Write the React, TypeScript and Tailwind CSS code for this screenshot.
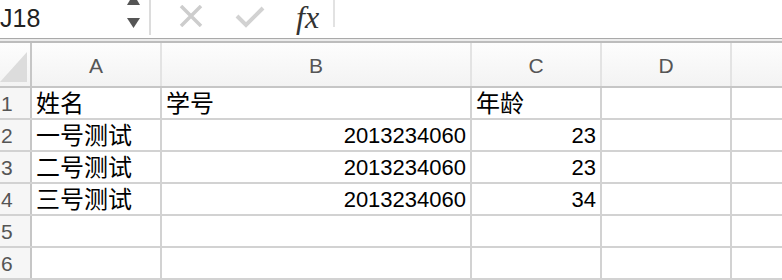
const font = { fontFamily: '"Liberation Sans", "Noto Sans CJK SC", sans-serif' }

const cols = ["A", "B", "C", "D"]
const widths = ["w-[130px]", "w-[310px]", "w-[130px]", "w-[130px]"]

type Cell = { text: string; right?: boolean }

const rows: Cell[][] = [
  [{ text: "姓名" }, { text: "学号" }, { text: "年龄" }, { text: "" }],
  [{ text: "一号测试" }, { text: "2013234060", right: true }, { text: "23", right: true }, { text: "" }],
  [{ text: "二号测试" }, { text: "2013234060", right: true }, { text: "23", right: true }, { text: "" }],
  [{ text: "三号测试" }, { text: "2013234060", right: true }, { text: "34", right: true }, { text: "" }],
  [{ text: "" }, { text: "" }, { text: "" }, { text: "" }],
  [{ text: "" }, { text: "" }, { text: "" }, { text: "" }],
]

function FormulaBar() {
  return (
    <div className="flex h-[38px] bg-white">
      <div className="relative flex w-[149px] flex-shrink-0 items-center">
        <span className="pb-[1px] text-[25px] leading-none text-[#222]">J18</span>
        <svg className="absolute left-[126px] top-[-6px]" width="15" height="36" viewBox="0 0 15 36">
          <polygon points="7.5,0 14,11 1,11" fill="#555" />
          <polygon points="1,24 14,24 7.5,34" fill="#555" />
        </svg>
      </div>
      <div className="h-[35px] w-[2px] bg-[#dcdcdc]" />
      <div className="flex items-start">
        <svg className="ml-[28px] mt-[5px]" width="24" height="22" viewBox="0 0 24 22">
          <path d="M2 1 L22 21 M22 1 L2 21" stroke="#cdcdcd" strokeWidth="3.5" fill="none" />
        </svg>
        <svg className="ml-[32px] mt-[6px]" width="30" height="22" viewBox="0 0 30 22">
          <path d="M2 10 L11 19 L28 2" stroke="#d2d2d2" strokeWidth="4" fill="none" />
        </svg>
        <span
          className="ml-[31px] mt-[1px] text-[32px] italic leading-[32px] text-[#333]"
          style={{ fontFamily: '"Liberation Serif", serif' }}
        >
          fx
        </span>
        <div className="ml-[14px] h-[27px] w-[2px] bg-[#e2e2e2]" />
      </div>
    </div>
  )
}

export default function App() {
  return (
    <div className="h-[280px] w-[782px] overflow-hidden bg-white" style={font}>
      <FormulaBar />
      <div className="h-[5px] border-t border-b-2 border-t-[#a9a9a9] border-b-[#bcbcbc] bg-[#ececec]" />

      <div className="flex h-[45px] border-b-2 border-[#c6c6c6] bg-gradient-to-b from-[#fdfdfd] to-[#f3f3f3]">
        <div className="flex w-[32px] flex-shrink-0 items-end border-r-2 border-[#c6c6c6]">
          <svg className="mb-[4px]" width="27" height="30" viewBox="0 0 27 30">
            <polygon points="27,0 27,30 0,30" fill="#dcdcdc" />
          </svg>
        </div>
        {cols.map((c, i) => (
          <div
            key={c}
            className={`${widths[i]} flex flex-shrink-0 items-center justify-center border-r-2 border-[#e3e3e3] pt-[2px] text-[21px] text-[#555]`}
          >
            {c}
          </div>
        ))}
        <div className="flex-1" />
      </div>

      {rows.map((r, ri) => (
        <div key={ri} className="flex h-[32px] border-b-2 border-[#d2d2d2]">
          <div className="flex w-[32px] flex-shrink-0 items-center border-r-2 border-[#c6c6c6] bg-[#f6f6f6] pl-[1px] pt-[2px] text-[21px] text-[#555]">
            {ri + 1}
          </div>
          {r.map((cell, ci) => (
            <div
              key={ci}
              className={`${widths[ci]} flex flex-shrink-0 items-center border-r-2 border-[#d2d2d2] px-[4px] pt-[2px] leading-none text-black ${cell.right ? "justify-end text-[22px]" : "justify-start text-[24px]"}`}
            >
              {cell.text}
            </div>
          ))}
          <div className="flex-1" />
        </div>
      ))}
    </div>
  )
}
